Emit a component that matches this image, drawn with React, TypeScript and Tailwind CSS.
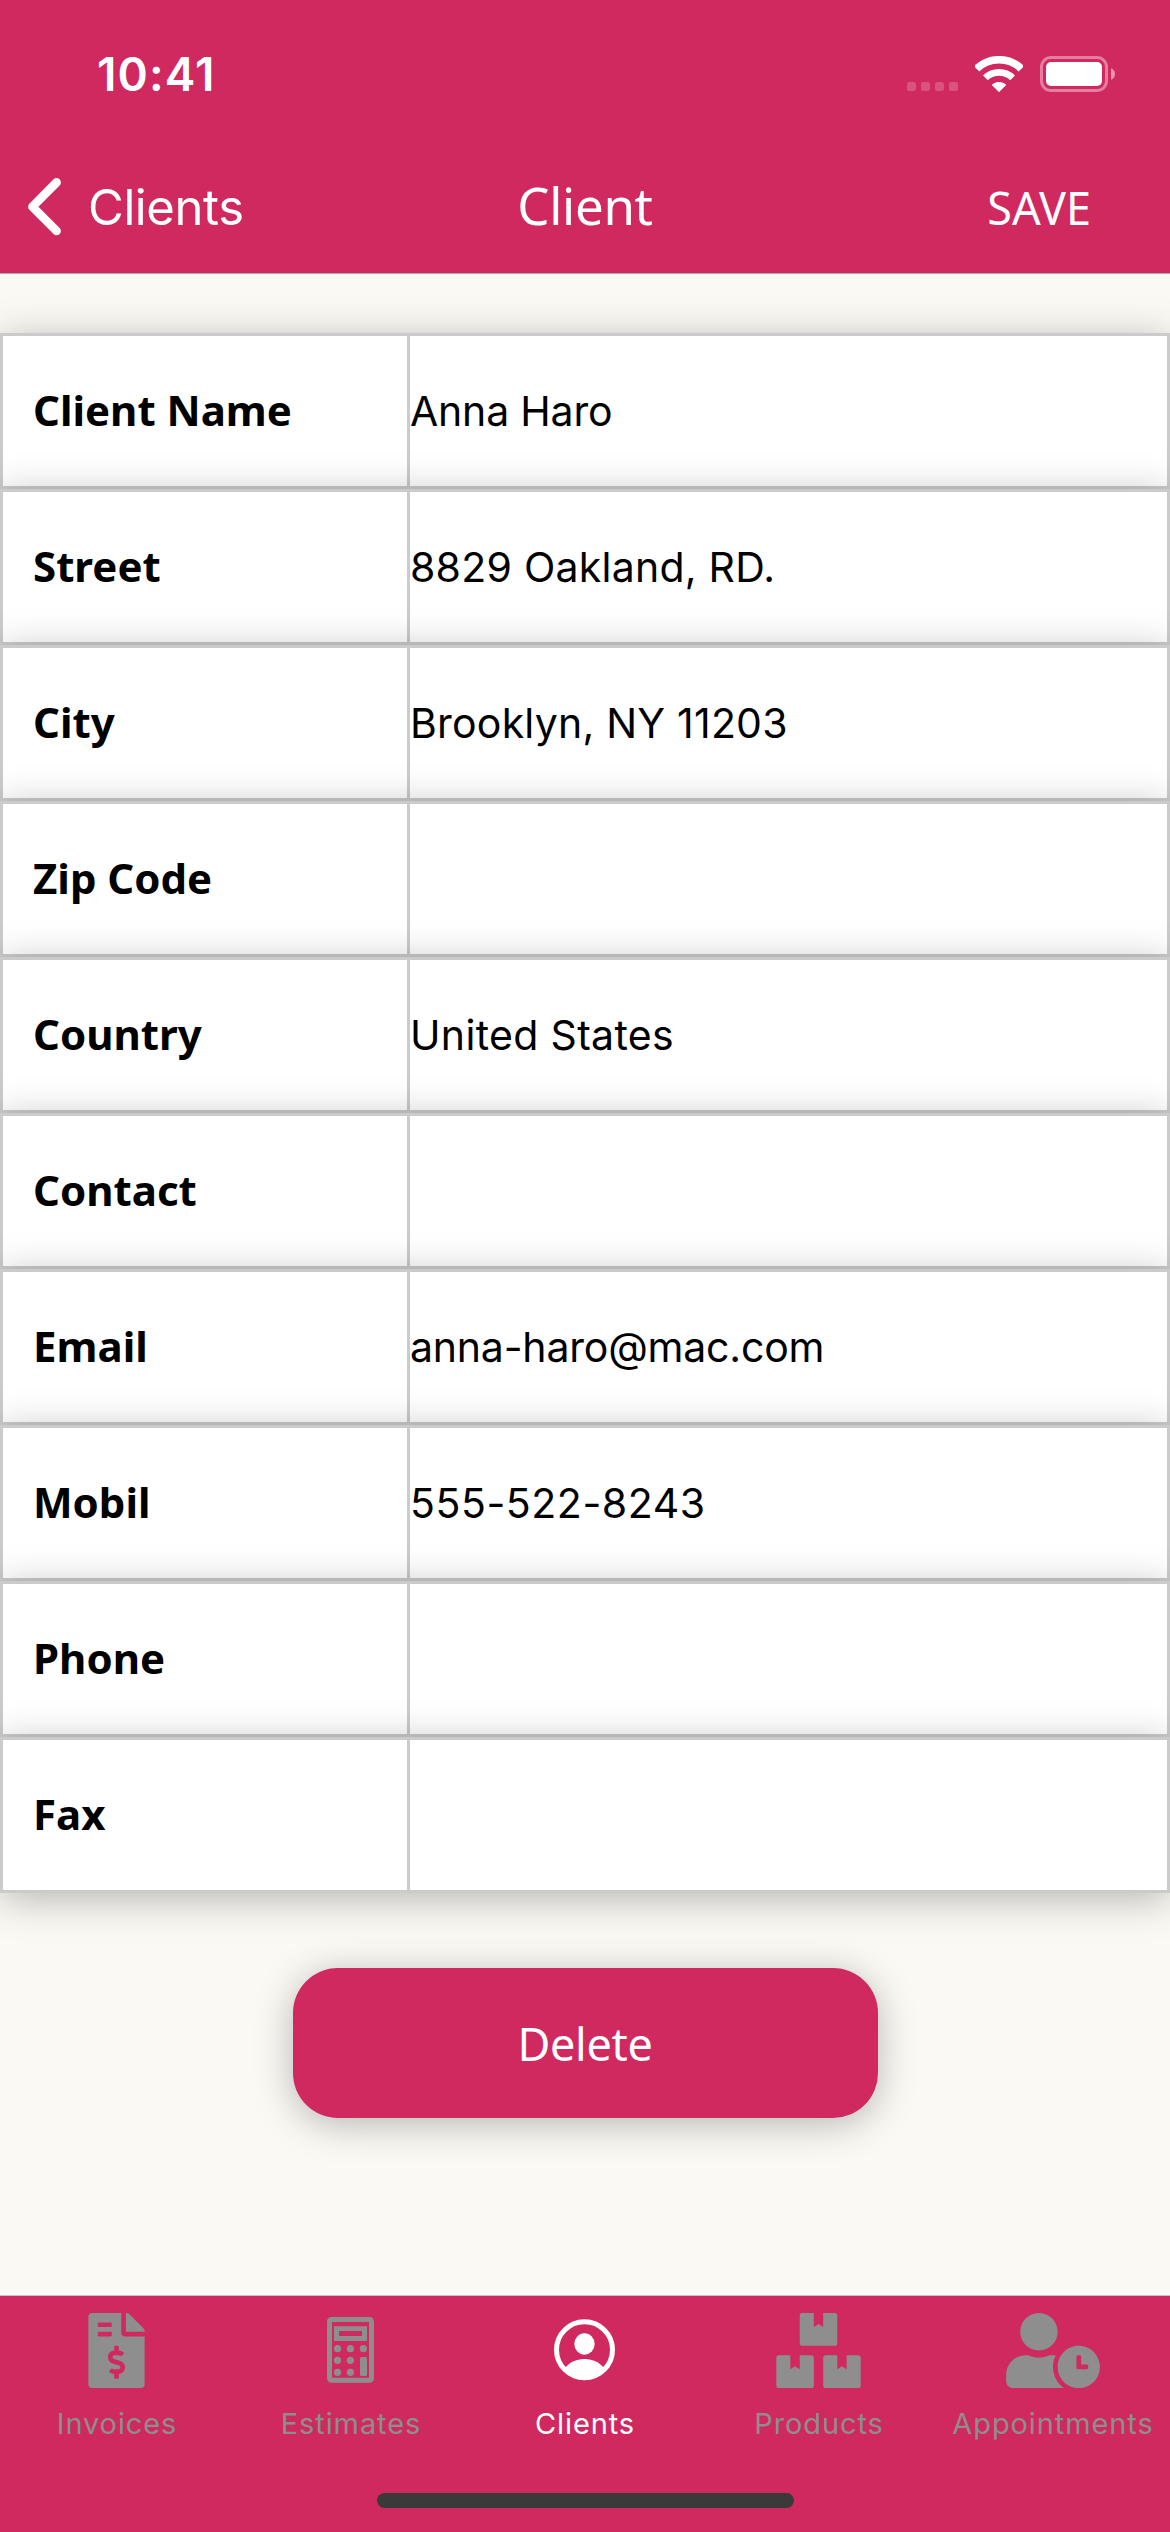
import React from "react";
import { FaBoxes, FaFileInvoiceDollar, FaUserClock } from "react-icons/fa";

type Field = { label: string; value: string; tracking?: string };

const fields: Field[] = [
  { label: "Client Name", value: "Anna Haro", tracking: "tracking-[-0.2px]" },
  { label: "Street", value: "8829 Oakland, RD.", tracking: "tracking-[0.24px]" },
  { label: "City", value: "Brooklyn, NY 11203", tracking: "tracking-[0.22px]" },
  { label: "Zip Code", value: "" },
  { label: "Country", value: "United States", tracking: "tracking-[0.33px]" },
  { label: "Contact", value: "" },
  { label: "Email", value: "anna-haro@mac.com", tracking: "tracking-[-0.2px]" },
  { label: "Mobil", value: "555-522-8243", tracking: "tracking-[0.55px]" },
  { label: "Phone", value: "" },
  { label: "Fax", value: "" },
];

function StatusBar() {
  return (
    <div className="flex h-[141px] items-center justify-between pt-[7px] pr-[55px] pl-[97px]">
      <span className="text-[46px] leading-none font-semibold tracking-[1.1px]">10:41</span>
      <div className="flex items-center">
        <div className="mt-[25px] flex gap-[5px]">
          {[0, 1, 2, 3].map((dot) => (
            <div key={dot} className="size-[9px] rounded-[2.5px] bg-white/20" />
          ))}
        </div>
        <svg className="ml-[17px]" width="48" height="37" viewBox="0 0 48 37" fill="none" stroke="white">
          <path d="M1.6 12.8A32.2 32.2 0 0 1 46.4 12.8" strokeWidth="7.6" />
          <path d="M10.4 21.9A19.6 19.6 0 0 1 37.6 21.9" strokeWidth="6.7" />
          <path d="M17.2 28.9A10.6 10.6 0 0 1 30.8 28.9L24 35.6Z" fill="white" strokeWidth="1" strokeLinejoin="round" />
        </svg>
        <svg className="ml-[17px]" width="75" height="36" viewBox="0 0 75 36" fill="none">
          <rect x="1.5" y="1.5" width="65" height="33" rx="9.5" stroke="white" strokeOpacity="0.4" strokeWidth="3" />
          <rect x="6" y="6" width="56" height="24" rx="5" fill="white" />
          <path d="M71 12.2C73.4 13 75 15.3 75 18S73.4 23 71 23.8Z" fill="white" fillOpacity="0.5" />
        </svg>
      </div>
    </div>
  );
}

function NavBar() {
  return (
    <div className="grid h-[132px] grid-cols-3 items-center">
      <div className="flex items-center pl-[27px]">
        <svg width="36" height="60" viewBox="0 0 36 60" fill="none" stroke="white" strokeWidth="8.6" strokeLinecap="round" strokeLinejoin="round">
          <path d="M29.6 5.4L5.4 29.8L29.6 54" />
        </svg>
        <span className="ml-[25px] text-[49px] leading-none tracking-[-0.4px]">Clients</span>
      </div>
      <h1 className="relative -top-[2px] text-center font-['Noto_Sans',sans-serif] text-[51px] leading-none tracking-[-0.3px]">
        Client
      </h1>
      <div className="pr-[79px] text-right font-['Noto_Sans',sans-serif] text-[45px] leading-none">SAVE</div>
    </div>
  );
}

function FieldRow({ label, value, tracking }: Field) {
  return (
    <div className="flex h-[156px] border-[3px] border-[#cbcbcb] bg-white text-black shadow-[0_6px_38px_rgba(0,0,0,0.27)]">
      <div className="flex w-[407px] items-center border-r-[3px] border-[#cbcbcb] pb-[4px] pl-[30px] font-['Noto_Sans',sans-serif] text-[42px] font-bold">
        {label}
      </div>
      <div className={`flex flex-1 items-center pt-[2px] text-[41px] ${tracking ?? ""}`}>{value}</div>
    </div>
  );
}

function CalculatorIcon() {
  return (
    <svg width="94" height="75" viewBox="0 0 94 75" fill="currentColor">
      <rect x="25.5" y="6.5" width="42" height="60.7" rx="2" fill="none" stroke="currentColor" strokeWidth="5" />
      <path fillRule="evenodd" d="M30 13.3H63V28H30ZM35 18V23H58V18Z" />
      {[35.7, 47.3, 59.3].map((y) => (
        <g key={y}>
          <circle cx="33.5" cy={y} r="3.6" />
          <circle cx="46.4" cy={y} r="3.6" />
        </g>
      ))}
      <circle cx="59.4" cy="35.7" r="3.6" />
      <rect x="56" y="44" width="7" height="19" rx="1.5" />
    </svg>
  );
}

function ContactIcon() {
  return (
    <svg width="94" height="75" viewBox="0 0 94 75" fill="currentColor">
      <circle cx="46.5" cy="36.7" r="28" fill="none" stroke="currentColor" strokeWidth="5" />
      <ellipse cx="46.5" cy="31" rx="10.2" ry="10.7" />
      <path d="M27 55.5C31 49.5 38 46 46.5 46S62 49.5 66 55.5A28 28 0 0 1 27 55.5Z" />
    </svg>
  );
}

const tabs = [
  { name: "Invoices", icon: <FaFileInvoiceDollar size={75} /> },
  { name: "Estimates", icon: <CalculatorIcon /> },
  { name: "Clients", icon: <ContactIcon />, active: true },
  { name: "Products", icon: <FaBoxes className="h-[75px] w-[85px]" /> },
  { name: "Appointments", icon: <FaUserClock className="h-[75px] w-[94px]" /> },
];

function TabBar() {
  return (
    <nav className="flex h-[237px] flex-col items-center border-t border-[#c9c3c6] bg-[#d0295f]">
      <div className="grid w-full grid-cols-5 pt-[17px]">
        {tabs.map((tab) => (
          <div key={tab.name} className={`flex flex-col items-center ${tab.active ? "text-white" : "text-[#8e8e8e]"}`}>
            <div className="flex h-[75px] items-center pr-px">{tab.icon}</div>
            <span className="mt-[18px] text-[29px] leading-[35px] tracking-[0.9px] whitespace-nowrap">{tab.name}</span>
          </div>
        ))}
      </div>
      <div className="mt-[52px] h-[15px] w-[417px] rounded-full bg-[#3a3a3a]" />
    </nav>
  );
}

export default function App() {
  return (
    <div className="flex h-[2532px] w-[1170px] flex-col overflow-hidden bg-[#faf9f4] font-['Inter',sans-serif] text-white">
      <header className="border-b border-[#b5a9ad] bg-[#d0295f]">
        <StatusBar />
        <NavBar />
      </header>
      <main className="flex flex-1 flex-col pt-[59px]">
        {fields.map((field) => (
          <FieldRow key={field.label} {...field} />
        ))}
        <button className="mx-auto mt-[75px] h-[150px] w-[585px] rounded-[45px] bg-[#d0295f] pt-[2px] font-['Noto_Sans',sans-serif] text-[45px] tracking-[-0.3px] shadow-[0_6px_38px_rgba(0,0,0,0.27)]">
          Delete
        </button>
      </main>
      <TabBar />
    </div>
  );
}
